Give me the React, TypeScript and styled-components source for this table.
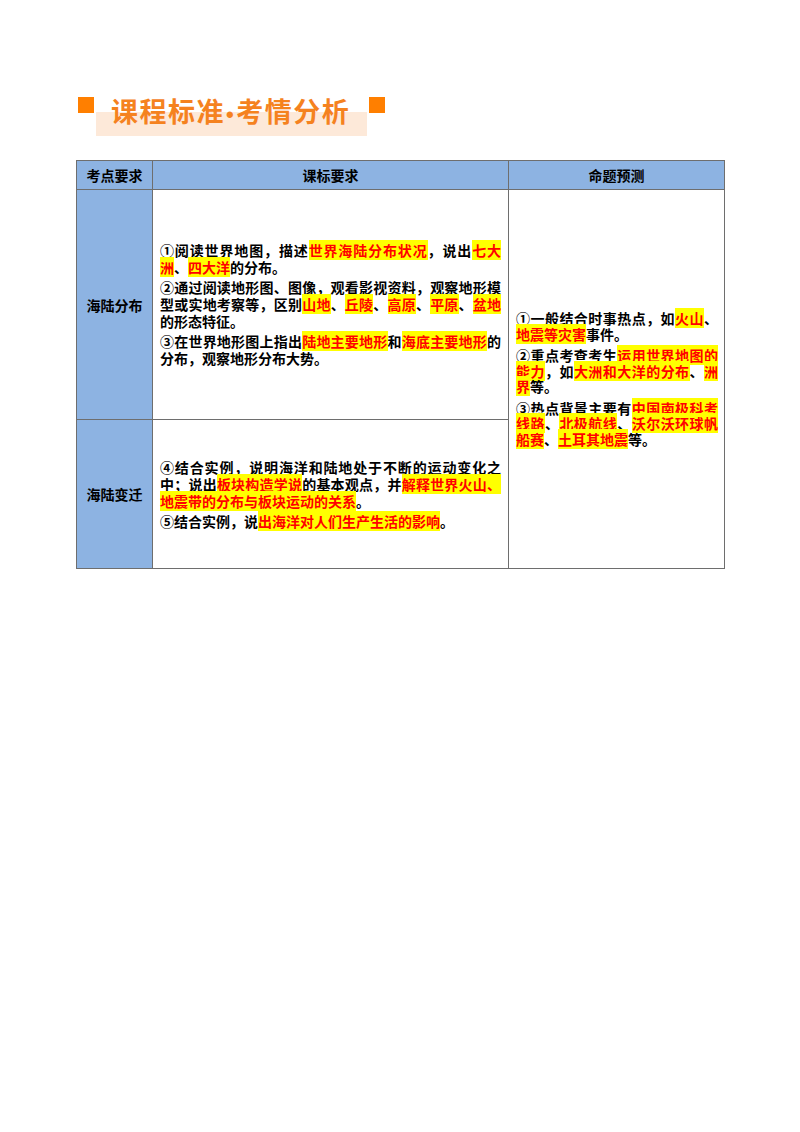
import styled, { createGlobalStyle } from "styled-components";

const GlobalStyle = createGlobalStyle`
  body {
    margin: 0;
    background: #ffffff;
    font-family: "Noto Sans CJK SC", "Noto Sans", sans-serif;
    color: #000;
  }
`;

type Part = string | { hl: string };

const courseRows: { topic: string; height: number; paras: Part[][] }[] = [
  {
    topic: "海陆分布",
    height: 230,
    paras: [
      ["①阅读世界地图，描述", { hl: "世界海陆分布状况" }, "，说出", { hl: "七大洲" }, "、", { hl: "四大洋" }, "的分布。"],
      [
        "②通过阅读地形图、图像，观看影视资料，观察地形模型或实地考察等，区别",
        { hl: "山地" }, "、", { hl: "丘陵" }, "、", { hl: "高原" }, "、", { hl: "平原" }, "、", { hl: "盆地" },
        "的形态特征。",
      ],
      ["③在世界地形图上指出", { hl: "陆地主要地形" }, "和", { hl: "海底主要地形" }, "的分布，观察地形分布大势。"],
    ],
  },
  {
    topic: "海陆变迁",
    height: 149,
    paras: [
      [
        "④结合实例，说明海洋和陆地处于不断的运动变化之中；说出",
        { hl: "板块构造学说" }, "的基本观点，并", { hl: "解释世界火山、地震带的分布与板块运动的关系" }, "。",
      ],
      ["⑤结合实例，说", { hl: "出海洋对人们生产生活的影响" }, "。"],
    ],
  },
];

const forecast: Part[][] = [
  ["①一般结合时事热点，如", { hl: "火山" }, "、", { hl: "地震等灾害" }, "事件。"],
  ["②重点考查考生", { hl: "运用世界地图的能力" }, "，如", { hl: "大洲和大洋的分布" }, "、", { hl: "洲界" }, "等。"],
  [
    "③热点背景主要有", { hl: "中国南极科考线路" }, "、", { hl: "北极航线" }, "、",
    { hl: "沃尔沃环球帆船赛" }, "、", { hl: "土耳其地震" }, "等。",
  ],
];

function Paragraphs({ paras, tight }: { paras: Part[][]; tight?: boolean }) {
  return (
    <>
      {paras.map((p, i) => (
        <Para key={i} $tight={tight}>
          {p.map((part, j) =>
            typeof part === "string" ? <span key={j}>{part}</span> : <Mark key={j}>{part.hl}</Mark>
          )}
        </Para>
      ))}
    </>
  );
}

export default function App() {
  return (
    <Page>
      <GlobalStyle />
      <TitleRow>
        <Square />
        <TitleBox>
          课程标准<Dot>•</Dot>考情分析
        </TitleBox>
        <Square />
      </TitleRow>

      <Table>
        <colgroup>
          <col style={{ width: 76 }} />
          <col style={{ width: 356 }} />
          <col style={{ width: 216 }} />
        </colgroup>
        <thead>
          <tr>
            <HeadCell>考点要求</HeadCell>
            <HeadCell>课标要求</HeadCell>
            <HeadCell>命题预测</HeadCell>
          </tr>
        </thead>
        <tbody>
          {courseRows.map((row, i) => (
            <tr key={row.topic} style={{ height: row.height }}>
              <TopicCell>{row.topic}</TopicCell>
              <TextCell>
                <Paragraphs paras={row.paras} />
              </TextCell>
              {i === 0 && (
                <ForecastCell rowSpan={2}>
                  <Paragraphs paras={forecast} tight />
                </ForecastCell>
              )}
            </tr>
          ))}
        </tbody>
      </Table>
    </Page>
  );
}

const Page = styled.div`
  width: 800px;
  min-height: 1132px;
  padding: 97px 0 0 76px;
  box-sizing: border-box;
`;

const TitleRow = styled.div`
  display: flex;
  align-items: flex-start;
  margin-left: 2px;
  margin-bottom: 24px;
`;

const Square = styled.div`
  width: 16px;
  height: 16px;
  background: #ff7f00;
  flex-shrink: 0;
`;

const TitleBox = styled.div`
  margin: 0 2px;
  width: 271px;
  height: 39px;
  box-sizing: border-box;
  padding-left: 15px;
  background: linear-gradient(to bottom, transparent 15px, #fde9d9 15px);
  color: #f5821f;
  font-size: 27px;
  font-weight: 700;
  line-height: 28px;
  letter-spacing: 1.5px;
  white-space: nowrap;
`;

const Dot = styled.span`
  font-family: "Liberation Sans", sans-serif;
  font-size: 22px;
  margin: 0 1px;
`;

const Table = styled.table`
  border-collapse: collapse;
  table-layout: fixed;
  width: 648px;
  font-size: 14px;
  font-weight: 700;
  border: 1.5px solid #6e6e6e;

  td,
  th {
    border: 1.5px solid #6e6e6e;
  }
`;

const HeadCell = styled.th`
  height: 28px;
  padding: 0;
  background: #8db3e2;
  font-size: 14px;
  font-weight: 700;
  text-align: center;
  vertical-align: middle;
`;

const TopicCell = styled.td`
  background: #8db3e2;
  text-align: center;
  vertical-align: middle;
  padding: 0;
  font-size: 14px;
`;

const TextCell = styled.td`
  vertical-align: middle;
  padding: 4px 7px 4px 7px;
`;

const ForecastCell = styled.td`
  vertical-align: middle;
  padding: 0 6px 0 7px;
`;

const Para = styled.p<{ $tight?: boolean }>`
  margin: 0 0 ${(p) => (p.$tight ? "6px" : "3px")};
  line-height: ${(p) => (p.$tight ? "15.5px" : "17px")};
  text-align: justify;

  &:last-child {
    margin-bottom: 0;
  }
`;

const Mark = styled.span`
  background: #ffff00;
  color: #ff0000;
`;
